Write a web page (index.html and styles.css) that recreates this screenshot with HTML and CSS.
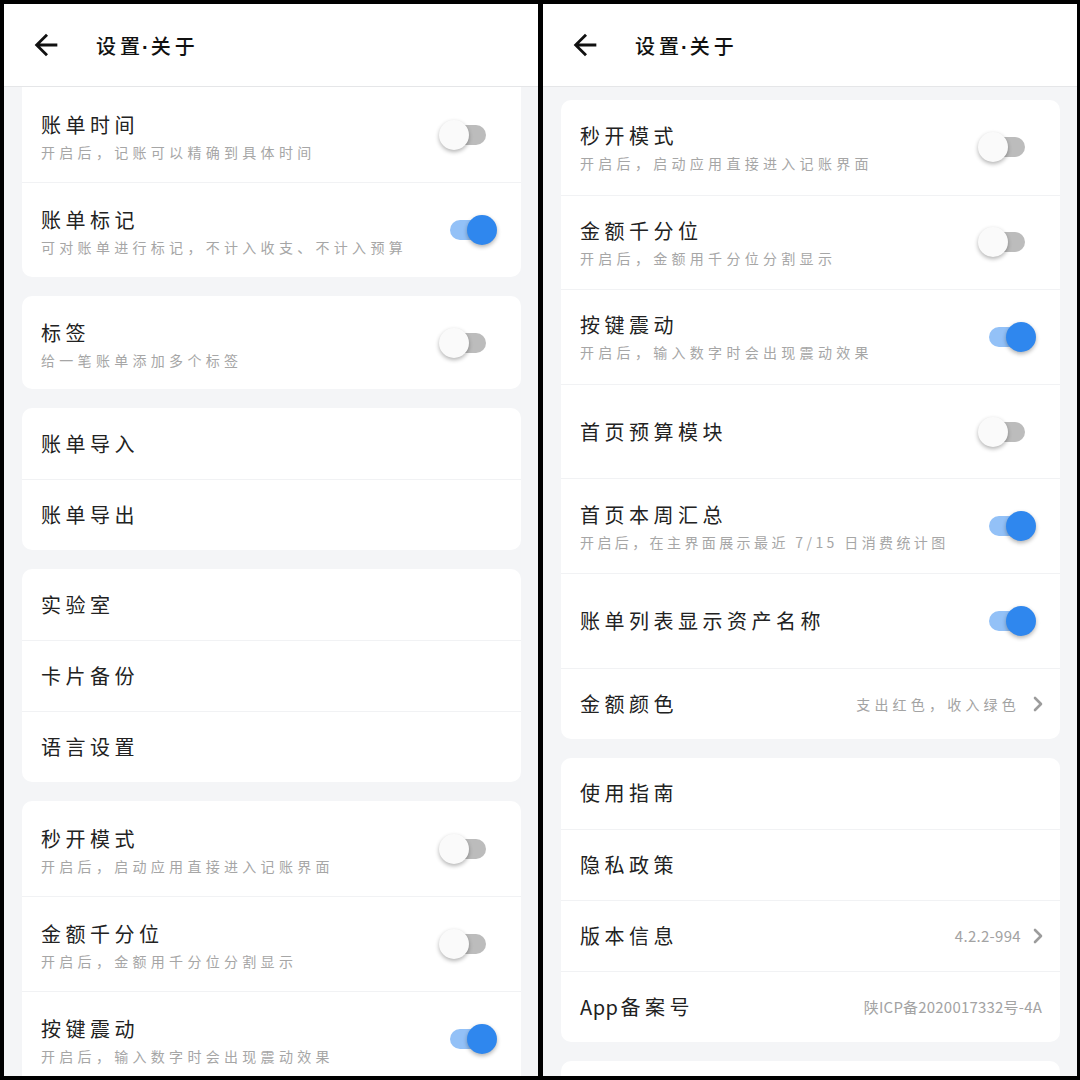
FILE: index.html
```html
<!DOCTYPE html>
<html lang="zh-CN">
<head>
    <meta charset="UTF-8">
    <meta name="viewport" content="width=device-width, initial-scale=1.0">
    <title>设置·关于</title>
    <link rel="stylesheet" href="styles.css">
</head>
<body>

    <div class="screens">

        <!-- Left screen -->
        <div class="phone">
            <div class="bar">
                <svg class="back" viewBox="0 0 24 24"><path d="M20 11H7.83l5.59-5.59L12 4l-8 8 8 8 1.41-1.41L7.83 13H20v-2z"/></svg>
                <h1>设置<span class="dot">·</span>关于</h1>
            </div>
            <div class="scroll left">
                <div class="card cut">
                    <div class="row tall">
                        <div class="text">
                            <div class="title">账单时间</div>
                            <div class="sub">开启后，记账可以精确到具体时间</div>
                        </div>
                        <div class="switch"></div>
                    </div>
                    <div class="row tall">
                        <div class="text">
                            <div class="title">账单标记</div>
                            <div class="sub">可对账单进行标记，不计入收支、不计入预算</div>
                        </div>
                        <div class="switch on"></div>
                    </div>
                </div>

                <div class="card">
                    <div class="row tall short">
                        <div class="text">
                            <div class="title">标签</div>
                            <div class="sub">给一笔账单添加多个标签</div>
                        </div>
                        <div class="switch"></div>
                    </div>
                </div>

                <div class="card">
                    <div class="row"><div class="title">账单导入</div></div>
                    <div class="row"><div class="title">账单导出</div></div>
                </div>

                <div class="card">
                    <div class="row"><div class="title">实验室</div></div>
                    <div class="row"><div class="title">卡片备份</div></div>
                    <div class="row"><div class="title">语言设置</div></div>
                </div>

                <div class="card">
                    <div class="row tall">
                        <div class="text">
                            <div class="title">秒开模式</div>
                            <div class="sub">开启后，启动应用直接进入记账界面</div>
                        </div>
                        <div class="switch"></div>
                    </div>
                    <div class="row tall">
                        <div class="text">
                            <div class="title">金额千分位</div>
                            <div class="sub">开启后，金额用千分位分割显示</div>
                        </div>
                        <div class="switch"></div>
                    </div>
                    <div class="row tall">
                        <div class="text">
                            <div class="title">按键震动</div>
                            <div class="sub">开启后，输入数字时会出现震动效果</div>
                        </div>
                        <div class="switch on"></div>
                    </div>
                </div>
            </div>
        </div>

        <!-- Right screen -->
        <div class="phone">
            <div class="bar">
                <svg class="back" viewBox="0 0 24 24"><path d="M20 11H7.83l5.59-5.59L12 4l-8 8 8 8 1.41-1.41L7.83 13H20v-2z"/></svg>
                <h1>设置<span class="dot">·</span>关于</h1>
            </div>
            <div class="scroll top">
                <div class="card">
                    <div class="row tall">
                        <div class="text">
                            <div class="title">秒开模式</div>
                            <div class="sub">开启后，启动应用直接进入记账界面</div>
                        </div>
                        <div class="switch"></div>
                    </div>
                    <div class="row tall">
                        <div class="text">
                            <div class="title">金额千分位</div>
                            <div class="sub">开启后，金额用千分位分割显示</div>
                        </div>
                        <div class="switch"></div>
                    </div>
                    <div class="row tall">
                        <div class="text">
                            <div class="title">按键震动</div>
                            <div class="sub">开启后，输入数字时会出现震动效果</div>
                        </div>
                        <div class="switch on"></div>
                    </div>
                    <div class="row tall">
                        <div class="title grow">首页预算模块</div>
                        <div class="switch"></div>
                    </div>
                    <div class="row tall">
                        <div class="text">
                            <div class="title">首页本周汇总</div>
                            <div class="sub narrow">开启后，在主界面展示最近 7/15 日消费统计图</div>
                        </div>
                        <div class="switch on"></div>
                    </div>
                    <div class="row tall">
                        <div class="title grow">账单列表显示资产名称</div>
                        <div class="switch on"></div>
                    </div>
                    <div class="row link">
                        <div class="title grow">金额颜色</div>
                        <span class="value">支出红色，收入绿色</span>
                        <svg class="chev" viewBox="0 0 12 18"><path d="M3 3l6 6-6 6"/></svg>
                    </div>
                </div>

                <div class="card">
                    <div class="row"><div class="title">使用指南</div></div>
                    <div class="row"><div class="title">隐私政策</div></div>
                    <div class="row link">
                        <div class="title grow">版本信息</div>
                        <span class="value plain">4.2.2-994</span>
                        <svg class="chev" viewBox="0 0 12 18"><path d="M3 3l6 6-6 6"/></svg>
                    </div>
                    <div class="row icp">
                        <div class="title grow"><span class="latin">App</span>备案号</div>
                        <span class="value plain">陕ICP备2020017332号-4A</span>
                    </div>
                </div>

                <div class="card">
                    <div class="row"></div>
                </div>
            </div>
        </div>

    </div>

</body>
</html>
```

FILE: styles.css
```css
body {
    margin: 0;
    background: #000;
    font-family: "Noto Sans CJK SC", "Noto Sans", sans-serif;
}

.screens {
    display: flex;
    gap: 5px;
    padding: 4px 3px 4px 4px;
    height: 1080px;
    box-sizing: border-box;
}

.phone {
    width: 534px;
    height: 1072px;
    background: #f4f5f7;
    overflow: hidden;
    display: flex;
    flex-direction: column;
}

/* top bar */
.bar {
    height: 83px;
    flex-shrink: 0;
    box-sizing: border-box;
    background: #fff;
    border-bottom: 1px solid #e5e6e8;
    display: flex;
    align-items: center;
    padding-left: 25px;
}
.back {
    width: 34px;
    height: 34px;
    fill: #111;
}
.bar h1 {
    margin: 0 0 0 33px;
    font-size: 20px;
    font-weight: 500;
    letter-spacing: 4px;
    color: #111;
}
.bar .dot {
    font-family: "Liberation Sans", sans-serif;
    font-weight: 700;
    letter-spacing: 2px;
    margin-left: -2px;
}

/* list */
.scroll {
    display: flex;
    flex-direction: column;
    gap: 19px;
    padding: 0 17px 0 18px;
}
.scroll.top {
    padding-top: 13px;
}

.card {
    background: #fff;
    border-radius: 10px;
    flex-shrink: 0;
}
.card.cut {
    border-radius: 0 0 10px 10px;
}

.row {
    display: flex;
    align-items: center;
    height: 71px;
    padding: 0 19px;
    box-sizing: border-box;
}
.row + .row {
    border-top: 1px solid #f1f2f4;
}
.row.tall {
    height: 94.6px;
}
.left .row.tall {
    height: 95px;
}
.left .row.short {
    height: 93px;
}
.row.link {
    padding-right: 16px;
}
.row.icp {
    padding-right: 18px;
}

.text,
.grow {
    flex: 1;
}
.tall .text {
    margin-top: 1px;
}
.left .tall .text {
    margin-top: 4px;
}

.title {
    font-size: 20px;
    line-height: 26px;
    letter-spacing: 4.5px;
    color: #222;
}
.title .latin {
    letter-spacing: 0.5px;
    margin-right: 2px;
}
.sub {
    margin-top: 4px;
    font-size: 14px;
    line-height: 20px;
    letter-spacing: 4.3px;
    color: #a6a6a6;
}
.sub.narrow {
    letter-spacing: 3.4px;
}

.value {
    font-size: 14px;
    letter-spacing: 4.2px;
    color: #a3a3a3;
    margin-right: 12px;
}
.value.plain {
    font-size: 15px;
    letter-spacing: 0.3px;
    margin-right: 11px;
}
.icp .value.plain {
    margin-right: 0;
    letter-spacing: 0.2px;
    font-size: 15px;
}

.chev {
    width: 12px;
    height: 18px;
    fill: none;
    stroke: #9c9c9c;
    stroke-width: 2.6;
    stroke-linecap: round;
    stroke-linejoin: round;
}

/* toggle switch */
.switch {
    position: relative;
    width: 36px;
    height: 20px;
    border-radius: 10px;
    background: #bcbcbc;
    margin-right: 16px;
    flex-shrink: 0;
}
.switch::after {
    content: "";
    position: absolute;
    top: -5px;
    left: -11px;
    width: 30px;
    height: 30px;
    border-radius: 50%;
    background: #fafafa;
    box-shadow: 0 2px 4px rgba(0, 0, 0, 0.3);
}
.switch.on {
    background: #93c1f7;
}
.switch.on::after {
    left: 17px;
    background: #2f87ee;
}
```
